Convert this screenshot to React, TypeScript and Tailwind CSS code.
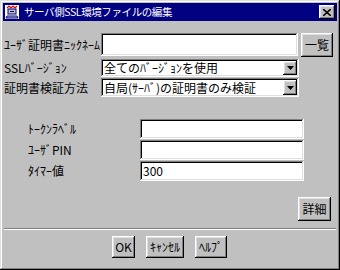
const raised =
  "shadow-[inset_-1px_-1px_#000,inset_1px_1px_#fff,inset_-2px_-2px_#808080,inset_2px_2px_#dfdfdf]";
const sunken =
  "shadow-[inset_-1px_-1px_#fff,inset_1px_1px_#808080,inset_-2px_-2px_#dfdfdf,inset_2px_2px_#000]";

const AppIcon = () => (
  <svg width="16" height="16" viewBox="0 0 16 16" className="shrink-0">
    <rect x="1" y="1" width="14" height="14" fill="#fff" />
    <path d="M3 4 L5 2 L7 4 L9 2 L11 4 L13 2" stroke="#e00000" strokeWidth="1.2" fill="none" />
    <rect x="4" y="5" width="8" height="5" fill="#c0c0c0" stroke="#000080" strokeWidth="1" />
    <rect x="6" y="7" width="4" height="1" fill="#000080" />
    <path d="M3 12 H13 L14 14 H2 Z" fill="#c0c0c0" stroke="#000080" strokeWidth="1" />
  </svg>
);

const Button = ({ label, className }: { label: string; className: string }) => (
  <div className={`flex items-center justify-center bg-[#c0c0c0] text-[12px] leading-[14px] ${raised} ${className}`}>
    {label}
  </div>
);

const Select = ({ value, className }: { value: string; className: string }) => (
  <div className={`flex items-center bg-white p-[2px] ${sunken} ${className}`}>
    <span className="flex-1 pl-[1px] text-[12px] leading-[14px] whitespace-nowrap">{value}</span>
    <div className={`flex h-full w-[14px] items-center justify-center bg-[#c0c0c0] ${raised}`}>
      <svg width="7" height="4" viewBox="0 0 7 4">
        <path d="M0 0 H7 L3.5 4 Z" fill="#000" />
      </svg>
    </div>
  </div>
);

const Field = ({ value = "", className }: { value?: string; className: string }) => (
  <div className={`flex items-center bg-white px-[3px] text-[12px] leading-[14px] ${sunken} ${className}`}>
    {value}
  </div>
);

export default function App() {
  return (
    <div
      className="flex h-[270px] w-[340px] flex-col bg-[#c0c0c0] p-[3px] text-black shadow-[inset_-1px_-1px_#000,inset_1px_1px_#dfdfdf,inset_-2px_-2px_#808080,inset_2px_2px_#fff]"
      style={{ fontFamily: '"Noto Sans CJK JP", "Liberation Sans", sans-serif' }}
    >
      {/* Title bar */}
      <div className="flex h-[18px] items-center bg-[#000080] pl-px pr-[2px]">
        <AppIcon />
        <span className="ml-[4px] text-[10.5px] leading-[14px] tracking-[-0.4px] text-white">
          サーバ側SSL環境ファイルの編集
        </span>
        <div className={`ml-auto flex h-[14px] w-[16px] items-center justify-center bg-[#c0c0c0] ${raised}`}>
          <svg width="8" height="7" viewBox="0 0 8 7">
            <path d="M0 0 L8 7 M8 0 L0 7" stroke="#000" strokeWidth="1.6" />
          </svg>
        </div>
      </div>

      {/* Certificate rows */}
      <div className="mt-[12px] flex h-[24px] items-center">
        <span className="w-[98px] pl-px text-[12px] leading-[14px] whitespace-nowrap">ﾕｰｻﾞ証明書ﾆｯｸﾈｰﾑ</span>
        <Field className="h-[23px] w-[197px] self-start" />
        <Button label="一覧" className="ml-[3px] h-[24px] w-[32px]" />
      </div>
      <div className="mt-[2px] flex items-center">
        <span className="w-[98px] pl-px text-[12px] leading-[14px] whitespace-nowrap">SSLﾊﾞｰｼﾞｮﾝ</span>
        <Select value="全てのﾊﾞｰｼﾞｮﾝを使用" className="h-[18px] w-[198px]" />
      </div>
      <div className="mt-[1px] flex items-center">
        <span className="w-[98px] pl-px text-[12px] leading-[14px] whitespace-nowrap">証明書検証方法</span>
        <Select value="自局(ｻｰﾊﾞ)の証明書のみ検証" className="h-[19px] w-[198px]" />
      </div>

      {/* Token rows */}
      <div className="mt-[22px] flex flex-col gap-px">
        {[
          ["ﾄｰｸﾝﾗﾍﾞﾙ", ""],
          ["ﾕｰｻﾞPIN", ""],
          ["ﾀｲﾏｰ値", "300"],
        ].map(([label, value]) => (
          <div key={label} className="flex h-[20px] items-center">
            <span className="w-[137px] pl-[25px] text-[12px] leading-[14px] whitespace-nowrap">{label}</span>
            <Field value={value} className="h-[20px] w-[164px]" />
          </div>
        ))}
      </div>

      <div className="mt-[16px] flex justify-end pr-[6px]">
        <Button label="詳細" className="h-[24px] w-[33px]" />
      </div>

      <div className="mx-px mt-[7px] h-[2px] border-t border-b border-t-[#808080] border-b-white" />

      <div className="mt-[6px] flex pl-[109px]">
        <Button label="OK" className="h-[22px] w-[23px]" />
        <Button label="ｷｬﾝｾﾙ" className="ml-[11px] h-[22px] w-[38px]" />
        <Button label="ﾍﾙﾌﾟ" className="ml-[11px] h-[22px] w-[32px]" />
      </div>
    </div>
  );
}
